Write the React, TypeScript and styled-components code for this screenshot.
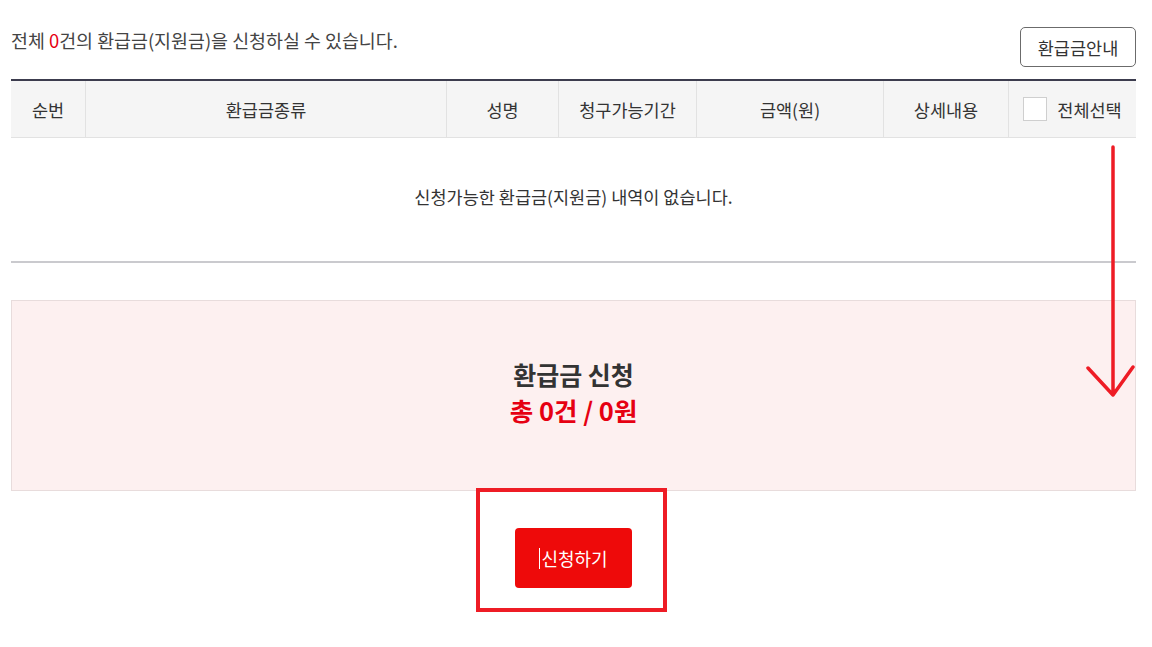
import React from "react";
import styled, { createGlobalStyle } from "styled-components";

const Global = createGlobalStyle`
  html, body { margin: 0; padding: 0; background: #fff; }
  body { font-family: "Noto Sans CJK KR", "Noto Sans", sans-serif; color: #333; }
`;

const Page = styled.div`
  position: relative;
  width: 1125px;
  min-height: 647px;
  padding-left: 11px;
`;

const TopBar = styled.div`
  display: flex;
  justify-content: space-between;
  align-items: flex-start;
  height: 79px;
`;

const Summary = styled.p`
  margin: 0;
  padding-top: 27px;
  font-size: 18.4px;
  line-height: 26px;
  color: #444;
`;

const Red = styled.span`
  color: #e60012;
`;

const GuideButton = styled.button`
  margin-top: 27px;
  width: 116px;
  height: 40px;
  border: 1px solid #6b6b6b;
  border-radius: 5px;
  background: #fff;
  font-family: inherit;
  font-size: 17.5px;
  color: #333;
  padding: 0;
`;

const Table = styled.div`
  border-top: 2px solid #3c3c4e;
`;

const HeadRow = styled.div`
  display: grid;
  grid-template-columns: 75px 361px 112px 138px 187px 125px 127px;
  height: 56px;
  background: #f5f5f5;
  border-bottom: 1px solid #e2e2e2;
`;

const HeadCell = styled.div<{ $last?: boolean }>`
  display: flex;
  align-items: center;
  justify-content: center;
  gap: 10px;
  font-size: 17.5px;
  color: #333;
  border-right: ${(p) => (p.$last ? "none" : "1px solid #e2e2e2")};
`;

const Check = styled.span`
  display: inline-block;
  width: 24px;
  height: 24px;
  background: #fff;
  border: 1px solid #cfcfcf;
  box-sizing: border-box;
`;

const EmptyRow = styled.div`
  height: 125px;
  display: flex;
  align-items: center;
  justify-content: center;
  font-size: 17.5px;
  color: #333;
  border-bottom: 2px solid #cacace;
  padding-bottom: 6px;
  box-sizing: border-box;
`;

const TotalBox = styled.div`
  margin-top: 37px;
  height: 191px;
  box-sizing: border-box;
  background: #fdf0f0;
  border: 1px solid #e8dcdc;
  display: flex;
  flex-direction: column;
  align-items: center;
  justify-content: center;
  gap: 2px;
  padding-bottom: 8px;
`;

const TotalTitle = styled.div`
  font-size: 25px;
  font-weight: 700;
  line-height: 34px;
  color: #333;
`;

const TotalAmount = styled.div`
  font-size: 25.5px;
  font-weight: 700;
  line-height: 34px;
  color: #e60012;
`;

const Actions = styled.div`
  display: flex;
  justify-content: center;
  padding-top: 37px;
`;

const ApplyButton = styled.button`
  width: 117px;
  height: 60px;
  border: none;
  border-radius: 4px;
  background: #ee0a0a;
  color: #fff;
  font-family: inherit;
  font-size: 18px;
  padding: 0;
  display: flex;
  align-items: center;
  justify-content: center;
`;

const Caret = styled.span`
  display: inline-block;
  width: 1px;
  height: 21px;
  background: #fff;
  margin-right: 1px;
`;

const Highlight = styled.div`
  position: absolute;
  left: 476px;
  top: 488px;
  width: 191px;
  height: 124px;
  box-sizing: border-box;
  border: 4px solid #ee1c25;
  pointer-events: none;
`;

const Arrow = styled.svg`
  position: absolute;
  left: 1080px;
  top: 140px;
  pointer-events: none;
`;

export default function App() {
  const heads = ["순번", "환급금종류", "성명", "청구가능기간", "금액(원)", "상세내용"];
  return (
    <>
      <Global />
      <Page>
        <TopBar>
          <Summary>
            전체 <Red>0</Red>건의 환급금(지원금)을 신청하실 수 있습니다.
          </Summary>
          <GuideButton>환급금안내</GuideButton>
        </TopBar>
        <Table>
          <HeadRow>
            {heads.map((h) => (
              <HeadCell key={h}>{h}</HeadCell>
            ))}
            <HeadCell $last>
              <Check />
              전체선택
            </HeadCell>
          </HeadRow>
          <EmptyRow>신청가능한 환급금(지원금) 내역이 없습니다.</EmptyRow>
        </Table>
        <TotalBox>
          <TotalTitle>환급금 신청</TotalTitle>
          <TotalAmount>총 0건 / 0원</TotalAmount>
        </TotalBox>
        <Actions>
          <ApplyButton>
            <Caret />
            신청하기
          </ApplyButton>
        </Actions>
        <Highlight />
        <Arrow width="60" height="262" viewBox="0 0 60 262">
          <path
            d="M33 7 L33 255 M8 228 L33 255 L53 227"
            fill="none"
            stroke="#ee1c25"
            strokeWidth="3.5"
            strokeLinecap="round"
            strokeLinejoin="round"
          />
        </Arrow>
      </Page>
    </>
  );
}
